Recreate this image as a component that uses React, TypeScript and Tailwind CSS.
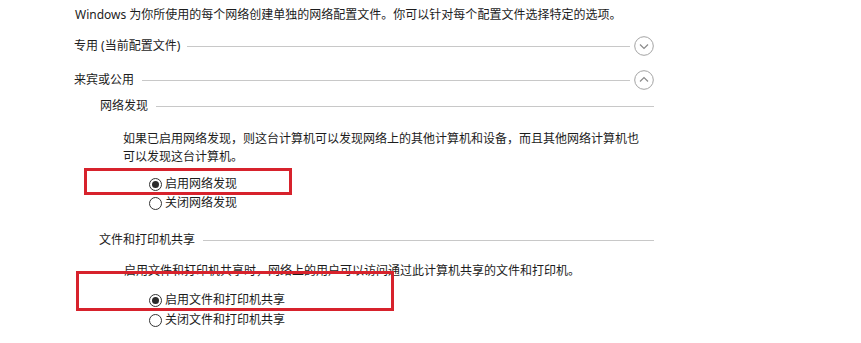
import React from 'react';

const font = { fontFamily: '"Noto Sans", "Noto Sans CJK SC", sans-serif' };

function ChevronCircle({ up }: { readonly up?: boolean }) {
  return (
    <svg width="20" height="20" viewBox="0 0 20 20" className="shrink-0">
      <circle cx="10" cy="10" r="9.3" fill="none" stroke="#a3a3a3" strokeWidth="1" />
      {up ? (
        <path d="M6 11.5 L10 7.5 L14 11.5" fill="none" stroke="#8a8a8a" strokeWidth="1.2" />
      ) : (
        <path d="M6 8.5 L10 12.5 L14 8.5" fill="none" stroke="#8a8a8a" strokeWidth="1.2" />
      )}
    </svg>
  );
}

function Radio({ checked, label, className }: { readonly checked?: boolean; readonly label: string; readonly className: string }) {
  return (
    <div className={`flex h-[18px] items-center pl-[149px] ${className}`}>
      <span className="flex h-[13px] w-[13px] items-center justify-center rounded-full border border-[#333] bg-white">
        {checked && <span className="h-[7px] w-[7px] rounded-full bg-[#2b2b2b]" />}
      </span>
      <span className="ml-[3px]">{label}</span>
    </div>
  );
}

export default function App() {
  return (
    <div style={font} className="relative h-[343px] w-[861px] overflow-hidden bg-white text-[12px] text-[#1c1c1c]">
      <div className="w-[654px] pt-[6px]">
        <p className="h-[18px] pl-[75px] leading-[18px]">
          Windows 为你所使用的每个网络创建单独的网络配置文件。你可以针对每个配置文件选择特定的选项。
        </p>

        <div className="mt-[12px] flex h-[20px] items-center pl-[74px]">
          <span>专用 (当前配置文件)</span>
          <span className="ml-[7px] mr-[4px] h-px flex-1 bg-[#c8c8c8]" />
          <ChevronCircle />
        </div>

        <div className="mt-[14px] flex h-[20px] items-center pl-[74px]">
          <span>来宾或公用</span>
          <span className="ml-[8px] mr-[4px] h-px flex-1 bg-[#c8c8c8]" />
          <ChevronCircle up />
        </div>

        <div className="mt-[8px] flex h-[16px] items-center pl-[100px]">
          <span>网络发现</span>
          <span className="ml-[8px] h-px flex-1 bg-[#c8c8c8]" />
        </div>

        <p className="mt-[16px] pl-[123px] leading-[18px]">
          如果已启用网络发现，则这台计算机可以发现网络上的其他计算机和设备，而且其他网络计算机也
          <br />
          可以发现这台计算机。
        </p>

        <Radio checked label="启用网络发现" className="mt-[9px]" />
        <Radio label="关闭网络发现" className="mt-px" />

        <div className="mt-[20px] flex h-[16px] items-center pl-[99px]">
          <span>文件和打印机共享</span>
          <span className="ml-[8px] h-px flex-1 bg-[#c8c8c8]" />
        </div>

        <p className="mt-[14px] h-[18px] pl-[124px] leading-[18px]">
          启用文件和打印机共享时，网络上的用户可以访问通过此计算机共享的文件和打印机。
        </p>

        <Radio checked label="启用文件和打印机共享" className="mt-[11px]" />
        <Radio label="关闭文件和打印机共享" className="mt-[2px]" />
      </div>

      {/* red highlight boxes drawn over the screenshot */}
      <div className="absolute left-[84px] top-[168px] h-[27px] w-[208px] border-[3px] border-[#d7222c]" />
      <div className="absolute left-[76px] top-[271px] h-[40px] w-[318px] border-[3px] border-[#d7222c]" />
    </div>
  );
}
